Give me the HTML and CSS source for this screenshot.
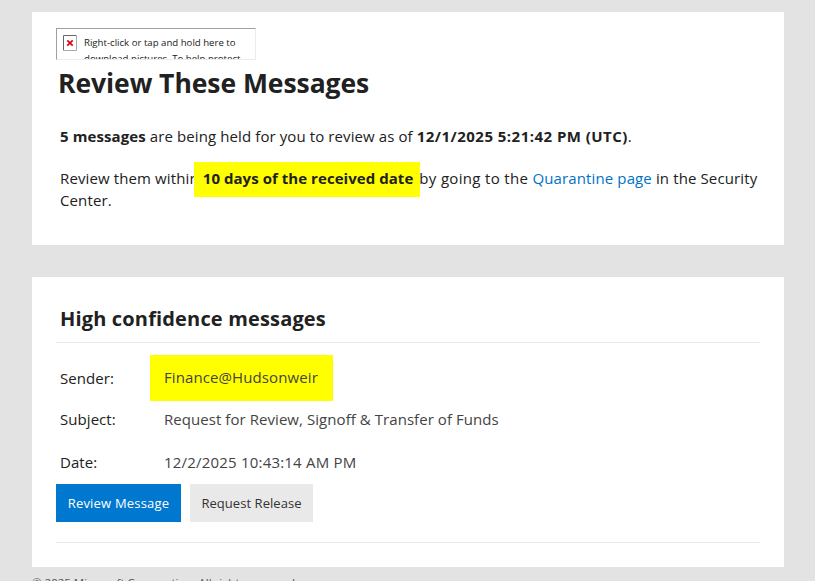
FILE: index.html
```html
<!DOCTYPE html>
<html lang="en">
<head>
<meta charset="utf-8">
<title>Review These Messages</title>
<link rel="stylesheet" href="styles.css">
</head>
<body>
<main class="page">
  <section class="card card-top">
    <div class="broken-img">
      <svg class="broken-icon" width="14" height="16" viewBox="0 0 14 16"><rect width="14" height="16" fill="#fff"/><path d="M0.5 15.5V0.5H13.5" fill="none" stroke="#666"/><path d="M13.5 0.5V15.5H0.5" fill="none" stroke="#aaa"/><path d="M4.3 5.3l5.4 5.4M9.7 5.3l-5.4 5.4" stroke="#e0000f" stroke-width="1.7"/></svg>
      <span class="broken-text">Right-click or tap and hold here to download pictures. To help protect your privacy, Outlook prevented</span>
    </div>
    <h1>Review These Messages</h1>
    <p class="lead"><b>5 messages</b> are being held for you to review as of <b class="stamp">12/1/2025 5:21:42 PM (UTC)</b>.</p>
    <p class="note">Review them within<span class="hl-inline"><b>10 days of the received date</b></span><span class="by">by going to the </span><a href="#">Quarantine page</a> in the Security Center.</p>
  </section>
  <section class="card card-msg">
    <h2>High confidence messages</h2>
    <div class="row row-sender"><span class="label">Sender:</span><span class="sender-hl">Finance@Hudsonweir</span></div>
    <div class="row row-subject"><span class="label">Subject:</span><span class="value">Request for Review, Signoff &amp; Transfer of Funds</span></div>
    <div class="row row-date"><span class="label">Date:</span><span class="value value-date">12/2/2025 10:43:14 AM PM</span></div>
    <div class="actions">
      <a class="btn btn-primary" href="#">Review Message</a>
      <a class="btn btn-secondary" href="#">Request Release</a>
    </div>
  </section>
  <footer class="foot">© 2025 Microsoft Corporation. All rights reserved.</footer>
</main>
</body>
</html>
```

FILE: styles.css
```css
* { box-sizing: border-box; }
html, body { margin: 0; height: 100%; overflow: hidden; }
body { background: #e3e3e3; font-family: "Open Sans", "Noto Sans", sans-serif; color: #212121; }
.page { padding: 12px 31px 0 32px; }
.card { background: #fff; }
.card-top { height: 233px; padding: 16px 24px 0; margin-bottom: 32px; }
.broken-img { width: 200px; height: 32px; display: flex; gap: 7px; padding: 6px 0 0 6px; border-top: 1px solid #a0a0a0; border-left: 1px solid #a0a0a0; border-right: 1px solid #ececec; border-bottom: 1px solid #ececec; overflow: hidden; }
.broken-icon { flex: none; }
.broken-text { font-size: 9.65px; line-height: 16px; color: #222; }
h1 { margin: 3px 0 0 2px; font-size: 26.5px; line-height: 40px; font-weight: 700; letter-spacing: -0.06px; color: #212121; }
.lead, .note { margin: 0 0 0 4px; font-size: 15px; line-height: 22px; letter-spacing: 0.1px; color: #212121; }
.lead { margin-top: 22px; }
.note { margin-top: 20px; letter-spacing: 0.12px; }
.stamp { letter-spacing: 0.47px; }
.hl-inline { background: #ff0; padding: 6px 7px 9px 9px; margin-left: -5px; margin-right: -1px; letter-spacing: 0.05px; }
.by { letter-spacing: 0.33px; }
a { color: #0072c6; text-decoration: none; }
.card-msg { height: 290px; padding: 24px 24px 0; }
h2 { margin: 0; height: 42px; padding: 3px 0 0 4px; font-size: 20px; line-height: 30px; font-weight: 700; letter-spacing: 0.16px; border-bottom: 1px solid #eaeaea; color: #212121; }
.row { display: flex; align-items: center; font-size: 15px; letter-spacing: 0.06px; padding-left: 4px; }
.label { width: 104px; color: #212121; flex: none; }
.value { color: #444; }
.value-date { letter-spacing: 0.2px; }
.row-sender { height: 46px; margin-top: 12px; }
.row-subject { height: 22px; margin-top: 7px; }
.row-date { height: 22px; margin-top: 21px; }
.sender-hl { background: #ff0; color: #444; margin-left: -14px; padding: 0 0 0 14px; height: 46px; line-height: 44px; width: 183px; letter-spacing: 0.1px; white-space: nowrap; }
.actions { display: flex; gap: 9px; margin-top: 11px; padding-bottom: 20px; border-bottom: 1px solid #eaeaea; }
.btn { height: 38px; line-height: 38px; font-size: 13px; text-align: center; }
.btn-primary { background: #0078cf; color: #fff; width: 125px; letter-spacing: 0.2px; }
.btn-secondary { background: #e9e9e9; color: #333; width: 123px; letter-spacing: 0.05px; }
.foot { margin-top: 8px; font-size: 11.5px; line-height: 16px; color: #555; }
```
